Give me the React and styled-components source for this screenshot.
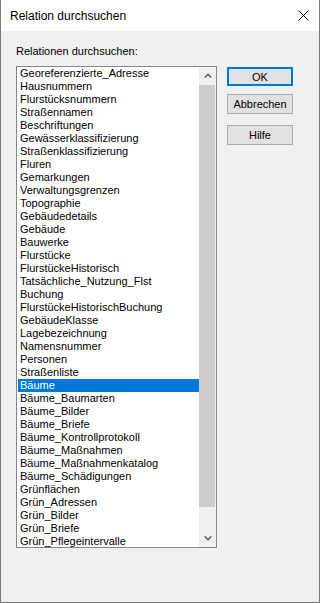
import React from "react";
import styled, { createGlobalStyle } from "styled-components";

const GlobalStyle = createGlobalStyle`
  html, body {
    margin: 0;
    padding: 0;
    background: #f0f0f0;
  }
  * {
    box-sizing: border-box;
  }
`;

const Window = styled.div`
  width: 320px;
  height: 603px;
  display: flex;
  flex-direction: column;
  background: #f0f0f0;
  border: 1px solid #7a7a7a;
  border-top: none;
  font-family: "Liberation Sans", Arial, sans-serif;
  color: #000;
  overflow: hidden;
`;

const TitleBar = styled.div`
  height: 31px;
  flex: none;
  display: flex;
  align-items: center;
  justify-content: space-between;
  background: #fff;
  padding: 0 10px 0 9px;
  font-size: 12px;
`;

const CloseButton = styled.div`
  width: 12px;
  height: 12px;
  display: flex;
  align-items: center;
  justify-content: center;
`;

const Content = styled.div`
  display: flex;
  padding: 14px 0 0 15px;
`;

const LeftCol = styled.div`
  display: flex;
  flex-direction: column;
`;

const Label = styled.div`
  font-size: 11px;
  line-height: 13px;
  margin-bottom: 8px;
`;

const ListBox = styled.div`
  width: 201px;
  height: 482px;
  border: 1px solid #828790;
  background: #fff;
  display: flex;
`;

const Items = styled.div`
  flex: 1;
  padding-left: 1px;
  overflow: hidden;
`;

const Item = styled.div`
  height: 13px;
  line-height: 13px;
  font-size: 11px;
  padding-left: 2px;
  white-space: nowrap;
  background: ${(p) => (p.$selected ? "#0078d7" : "transparent")};
  color: ${(p) => (p.$selected ? "#fff" : "#000")};
`;

const ScrollBar = styled.div`
  width: 17px;
  flex: none;
  background: #f0f0f0;
  display: flex;
  flex-direction: column;
`;

const Arrow = styled.div`
  height: 17px;
  flex: none;
  display: flex;
  align-items: center;
  justify-content: center;
`;

const Track = styled.div`
  flex: 1;
  padding: 1px 1px 0 0;
`;

const Thumb = styled.div`
  height: 422px;
  background: #cdcdcd;
`;

const ButtonCol = styled.div`
  display: flex;
  flex-direction: column;
  margin: 22px 0 0 10px;
`;

const Button = styled.div`
  width: 66px;
  height: ${(p) => (p.$default ? "19px" : "20px")};
  margin-bottom: ${(p) => (p.$gap ? p.$gap : 0)}px;
  background: #e1e1e1;
  border: ${(p) => (p.$default ? "2px solid #0078d7" : "1px solid #adadad")};
  font-size: 11px;
  display: flex;
  align-items: center;
  justify-content: center;
`;

const relations = [
  "Georeferenzierte_Adresse",
  "Hausnummern",
  "Flurstücksnummern",
  "Straßennamen",
  "Beschriftungen",
  "Gewässerklassifizierung",
  "Straßenklassifizierung",
  "Fluren",
  "Gemarkungen",
  "Verwaltungsgrenzen",
  "Topographie",
  "Gebäudedetails",
  "Gebäude",
  "Bauwerke",
  "Flurstücke",
  "FlurstückeHistorisch",
  "Tatsächliche_Nutzung_Flst",
  "Buchung",
  "FlurstückeHistorischBuchung",
  "GebäudeKlasse",
  "Lagebezeichnung",
  "Namensnummer",
  "Personen",
  "Straßenliste",
  "Bäume",
  "Bäume_Baumarten",
  "Bäume_Bilder",
  "Bäume_Briefe",
  "Bäume_Kontrollprotokoll",
  "Bäume_Maßnahmen",
  "Bäume_Maßnahmenkatalog",
  "Bäume_Schädigungen",
  "Grünflächen",
  "Grün_Adressen",
  "Grün_Bilder",
  "Grün_Briefe",
  "Grün_Pflegeintervalle",
];

const Chevron = ({ up }) => (
  <svg width="8" height="5" viewBox="0 0 8 5">
    <polyline
      points={up ? "0.8,4.5 4,1.3 7.2,4.5" : "0.8,0.5 4,3.7 7.2,0.5"}
      fill="none"
      stroke="#606060"
      strokeWidth="1.6"
    />
  </svg>
);

export default function App() {
  return (
    <>
      <GlobalStyle />
      <Window>
        <TitleBar>
          <span>Relation durchsuchen</span>
          <CloseButton>
            <svg width="11" height="11" viewBox="0 0 11 11">
              <path d="M0.5 0.5L10.5 10.5M10.5 0.5L0.5 10.5" stroke="#000" strokeWidth="1" />
            </svg>
          </CloseButton>
        </TitleBar>
        <Content>
          <LeftCol>
            <Label>Relationen durchsuchen:</Label>
            <ListBox>
              <Items>
                {relations.map((r) => (
                  <Item key={r} $selected={r === "Bäume"}>
                    {r}
                  </Item>
                ))}
              </Items>
              <ScrollBar>
                <Arrow>
                  <Chevron up />
                </Arrow>
                <Track>
                  <Thumb />
                </Track>
                <Arrow>
                  <Chevron />
                </Arrow>
              </ScrollBar>
            </ListBox>
          </LeftCol>
          <ButtonCol>
            <Button $default $gap={8}>OK</Button>
            <Button $gap={11}>Abbrechen</Button>
            <Button>Hilfe</Button>
          </ButtonCol>
        </Content>
      </Window>
    </>
  );
}
